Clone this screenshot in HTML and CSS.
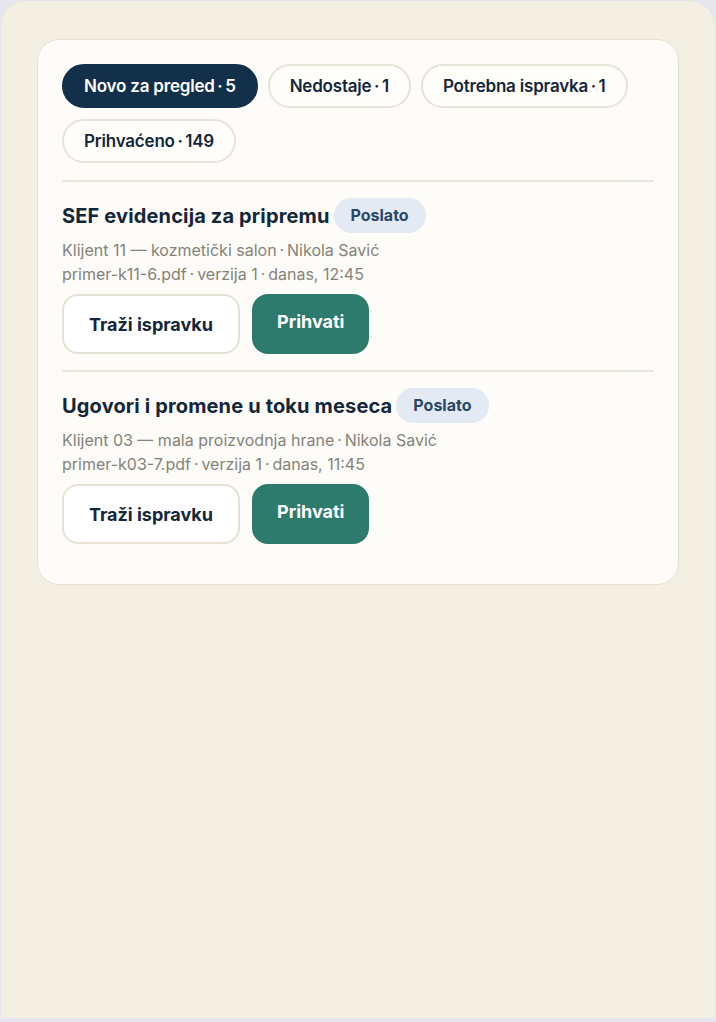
FILE: index.html
```html
<!DOCTYPE html>
<html lang="sr">
<head>
    <meta charset="UTF-8">
    <meta name="viewport" content="width=device-width, initial-scale=1.0">
    <title>Pregled dokumenata</title>
    <link rel="stylesheet" href="styles.css">
</head>
<body>
    <div class="app">
        <div class="card">
            <div class="tabs">
                <button class="chip active">Novo za pregled&#8201;·&#8201;5</button>
                <button class="chip">Nedostaje&#8201;·&#8201;1</button>
                <button class="chip">Potrebna ispravka&#8201;·&#8201;1</button>
                <button class="chip">Prihvaćeno&#8201;·&#8201;149</button>
            </div>

            <div class="item">
                <div class="item-head">
                    <h2 class="item-title">SEF evidencija za pripremu</h2>
                    <span class="badge">Poslato</span>
                </div>
                <div class="meta">Klijent 11 — kozmetički salon&#8201;·&#8201;Nikola Savić</div>
                <div class="meta">primer-k11-6.pdf&#8201;·&#8201;verzija 1&#8201;·&#8201;danas, 12:45</div>
                <div class="actions">
                    <button class="btn">Traži ispravku</button>
                    <button class="btn primary">Prihvati</button>
                </div>
            </div>

            <div class="item">
                <div class="item-head">
                    <h2 class="item-title">Ugovori i promene u toku meseca</h2>
                    <span class="badge">Poslato</span>
                </div>
                <div class="meta">Klijent 03 — mala proizvodnja hrane&#8201;·&#8201;Nikola Savić</div>
                <div class="meta">primer-k03-7.pdf&#8201;·&#8201;verzija 1&#8201;·&#8201;danas, 11:45</div>
                <div class="actions">
                    <button class="btn">Traži ispravku</button>
                    <button class="btn primary">Prihvati</button>
                </div>
            </div>
        </div>
    </div>
</body>
</html>
```

FILE: styles.css
```css
* {
    box-sizing: border-box;
}
body {
    margin: 0;
    background: #e6e7ee;
    font-family: Inter, "Noto Sans", sans-serif;
    color: #14263a;
}
.app {
    min-height: 1018px;
    background: #f3efe3;
    border: 1px solid #e3e3e8;
    border-bottom: none;
    border-radius: 26px 26px 0 0;
    padding: 38px 36px;
}
.card {
    background: #fdfcf8;
    border: 1px solid #e6e1d4;
    border-radius: 22px;
    padding: 24px;
}
.tabs {
    display: flex;
    flex-wrap: wrap;
    gap: 11px 10px;
    padding-bottom: 17px;
}
.chip {
    font-family: inherit;
    font-size: 17px;
    font-weight: 600;
    letter-spacing: -0.2px;
    line-height: 20px;
    color: #14263a;
    background: #fffefb;
    border: 2px solid #e7e3d8;
    border-radius: 999px;
    padding: 10px 20px;
}
.chip.active {
    background: #13304a;
    border-color: #13304a;
    color: #fff;
}
.item {
    border-top: 2px solid #ebe7dc;
    padding: 16px 0;
}
.item-head {
    display: flex;
    align-items: center;
    gap: 4px;
    margin-bottom: 5px;
}
.item-title {
    margin: 0;
    font-size: 20px;
    font-weight: 700;
    letter-spacing: 0.15px;
    color: #14263a;
}
.badge {
    background: #e3eaf3;
    color: #284767;
    font-size: 16px;
    font-weight: 700;
    padding: 8px 17px;
    border-radius: 999px;
    line-height: 19px;
}
.meta {
    font-size: 16px;
    line-height: 24px;
    color: #858279;
}
.actions {
    display: flex;
    gap: 12px;
    margin-top: 8px;
}
.btn {
    font-family: inherit;
    height: 60px;
    padding: 0 25px;
    font-size: 18px;
    font-weight: 700;
    color: #14263a;
    background: #fff;
    border: 2px solid #e6e1d4;
    border-radius: 16px;
}
.btn.primary {
    padding: 0 23px 6px;
    background: #2d7b6d;
    border-color: #2d7b6d;
    color: #fff;
}
```
